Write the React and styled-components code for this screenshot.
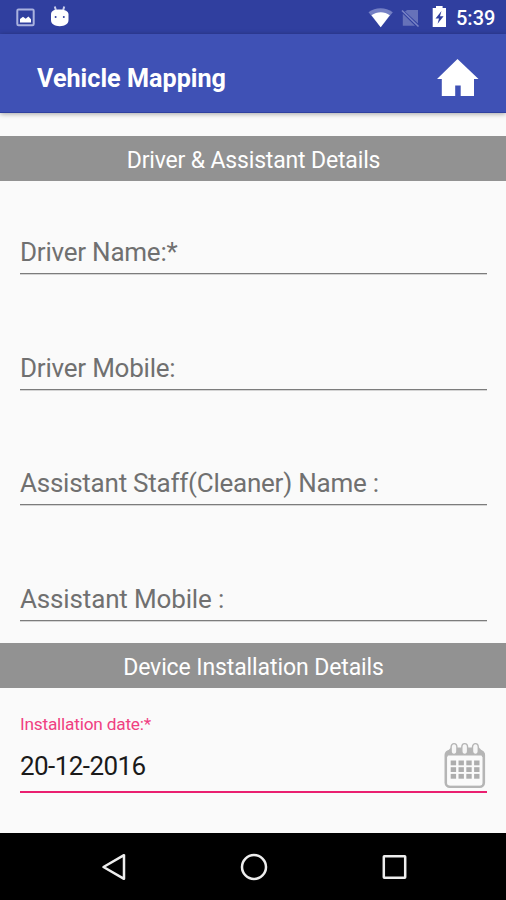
import React from 'react';
import styled, { createGlobalStyle } from 'styled-components';

const GlobalStyle = createGlobalStyle`
  body {
    margin: 0;
    background: #fafafa;
    font-family: Roboto, sans-serif;
  }

  svg {
    display: block;
  }
`;

const Screen = styled.div`
  display: flex;
  flex-direction: column;
  width: 506px;
  height: 900px;
  overflow: hidden;
`;

const StatusBar = styled.div`
  display: flex;
  flex: none;
  justify-content: space-between;
  height: 34px;
  background: #303f9f;
`;

const Clock = styled.div`
  width: 50px;
  font-size: 20px;
  font-weight: 500;
  line-height: 37px;
  color: #fff;
  white-space: nowrap;
`;

const StatusGroup = styled.div`
  display: flex;
`;

const AppBar = styled.header`
  display: flex;
  flex: none;
  align-items: center;
  justify-content: space-between;
  box-sizing: border-box;
  height: 79px;
  padding: 0 27px 0 37px;
  background: #3f51b5;
  border-bottom: 1px solid #2f409f;
  box-shadow: 0 1px 5px rgba(0, 0, 0, 0.35);
`;

const Title = styled.h1`
  margin: 11px 0 0;
  font-size: 25.2px;
  font-weight: 700;
  line-height: 30px;
  color: #fff;
`;

const HomeButton = styled.div`
  margin-top: 8px;
`;

const Content = styled.main`
  flex: 1;
  padding-top: 23px;
`;

const SectionHeader = styled.h2`
  margin: 0;
  height: 45px;
  padding-left: 1px;
  font-size: 23px;
  font-weight: 400;
  line-height: 49px;
  letter-spacing: ${({ $spacing }) => $spacing || 0}px;
  text-align: center;
  color: #fff;
  background: #929292;
`;

const Field = styled.div`
  display: flex;
  flex-direction: column;
  justify-content: flex-end;
  box-sizing: border-box;
  height: 115.5px;
  padding: 0 19px 22.2px 20px;
`;

const FieldLabel = styled.div`
  padding-bottom: 5px;
  font-size: 26px;
  line-height: 32px;
  letter-spacing: ${({ $spacing }) => $spacing || 0}px;
  color: #707070;
  white-space: pre;
  border-bottom: 1px solid #7c7c7c;
  box-shadow: 0 1px 0 #d4d4d4;
`;

const DateField = styled.div`
  margin: 25px 19px 0 20px;
  border-bottom: 2px solid #ea1f70;
`;

const DateLabel = styled.div`
  height: 22px;
  font-size: 17.3px;
  line-height: 22px;
  letter-spacing: -0.22px;
  color: #f03f82;
`;

const DateRow = styled.div`
  display: flex;
  justify-content: space-between;
  height: 56px;
`;

const DateValue = styled.div`
  padding-top: 15px;
  font-size: 26px;
  line-height: 32px;
  letter-spacing: -0.56px;
  color: #1a1a1a;
`;

const CalendarButton = styled.div`
  padding: 7px 1px 0 0;
`;

const NavBar = styled.nav`
  display: flex;
  flex: none;
  align-items: center;
  justify-content: space-between;
  box-sizing: border-box;
  height: 67px;
  padding: 1px 97px 0 99px;
  background: #000;
`;

const fields = [
  { label: 'Driver Name:*', spacing: -0.23 },
  { label: 'Driver Mobile:', spacing: -0.22 },
  { label: 'Assistant Staff(Cleaner) Name :', spacing: -0.24 },
  { label: 'Assistant Mobile :', spacing: -0.15 },
];

const NotificationIcons = () => (
  <svg width="80" height="34" viewBox="0 0 80 34">
    <rect x="17.3" y="9.5" width="16.4" height="15.8" rx="1.2" fill="none" stroke="#aab2df" strokeWidth="2" />
    <path d="M20 22.5v-3.4l3-2.4 2.7 2 2.7-2.3 2.6 2.8v3.3z" fill="#fff" />
    <path d="M54.8 6.5l1.3 4.5M64.2 6.5L63 11" stroke="#c9ceec" strokeWidth="2" />
    <path d="M51 14.5c0-3.8 3.4-5 8.6-5s8.9 1.5 8.9 5V20c0 4-3.7 6.2-8.8 6.2S51 24 51 20z" fill="#fff" />
    <circle cx="55.6" cy="17" r="1" fill="#303f9f" />
    <circle cx="63.8" cy="17" r="1" fill="#303f9f" />
  </svg>
);

const SystemIcons = () => (
  <svg width="88" height="34" viewBox="368 0 88 34">
    <path d="M368.5 12.2C375.5 7 385.5 7 392.8 12.2L380.7 27.2z" fill="#7580c4" />
    <path d="M371.5 15.2c5.5-4 13-4 18.3 0l-9.1 12z" fill="#fff" />
    <path d="M407.2 10H418v13.4L405 11.6zM402.8 13.7L415 25.8h-12.2z" fill="#6672b9" />
    <path d="M402 10.5l16.5 16" stroke="#7a85c6" strokeWidth="1.6" />
    <path d="M436 6h6.6v2h3.4v19h-13.3V8h3.3z" fill="#fff" />
    <path d="M441.5 11l-6 7.4h3.5l-1.4 5.4 6-7.6H440z" fill="#303f9f" />
  </svg>
);

const HomeIcon = () => (
  <svg width="42" height="39" viewBox="0 0 42 39">
    <path d="M20.5 1L41.5 21H37v17H23.7V27.5h-5.5V38H4.8V21H0z" fill="#fff" />
  </svg>
);

const CalendarIcon = () => (
  <svg width="42" height="47" viewBox="0 0 42 47">
    <path d="M1 12l6-6.5h28l6 6.5v3H1z" fill="#b5b5b5" />
    <rect x="1.8" y="9" width="38" height="35.7" rx="4" fill="none" stroke="#b5b5b5" strokeWidth="2.6" />
    {[10, 20.7, 31.4].map((x) => (
      <path
        key={x}
        d={`M${x - 2.9} 9V5.2a2.9 3.6 0 0 1 5.8 0V9a2.9 3.4 0 0 1 -5.8 0z`}
        fill="#f7f7f7"
        stroke="#b5b5b5"
        strokeWidth="1.4"
      />
    ))}
    <rect x="3.5" y="13.5" width="34.5" height="29.8" rx="1" fill="#fafafa" />
    {[18.5, 25.2, 31.9].map((y) => (
      [6.7, 14.5, 22.3, 30.1].map((x) => (
        <rect key={`${x}-${y}`} x={x} y={y} width="5.4" height="4.8" fill="#adadad" />
      ))
    ))}
  </svg>
);

const BackIcon = () => (
  <svg width="30" height="30" viewBox="0 0 30 30">
    <path d="M25 3.2v23.6L4.5 15z" fill="none" stroke="#eee" strokeWidth="2.5" strokeLinejoin="round" />
  </svg>
);

const CircleIcon = () => (
  <svg width="30" height="30" viewBox="0 0 30 30">
    <circle cx="15" cy="15" r="12" fill="none" stroke="#eee" strokeWidth="2.5" />
  </svg>
);

const SquareIcon = () => (
  <svg width="30" height="30" viewBox="0 0 30 30">
    <rect x="4.8" y="4.3" width="21.4" height="21.4" rx="0.5" fill="none" stroke="#eee" strokeWidth="2.5" />
  </svg>
);

const App = () => (
  <Screen>
    <GlobalStyle />
    <StatusBar>
      <NotificationIcons />
      <StatusGroup>
        <SystemIcons />
        <Clock>5:39</Clock>
      </StatusGroup>
    </StatusBar>
    <AppBar>
      <Title>Vehicle Mapping</Title>
      <HomeButton>
        <HomeIcon />
      </HomeButton>
    </AppBar>
    <Content>
      <SectionHeader $spacing={-0.16}>Driver &amp; Assistant Details</SectionHeader>
      {fields.map(({ label, spacing }) => (
        <Field key={label}>
          <FieldLabel $spacing={spacing}>{label}</FieldLabel>
        </Field>
      ))}
      <SectionHeader $spacing={-0.1}>Device Installation Details</SectionHeader>
      <DateField>
        <DateLabel>Installation date:*</DateLabel>
        <DateRow>
          <DateValue>20-12-2016</DateValue>
          <CalendarButton>
            <CalendarIcon />
          </CalendarButton>
        </DateRow>
      </DateField>
    </Content>
    <NavBar>
      <BackIcon />
      <CircleIcon />
      <SquareIcon />
    </NavBar>
  </Screen>
);

export default App;
